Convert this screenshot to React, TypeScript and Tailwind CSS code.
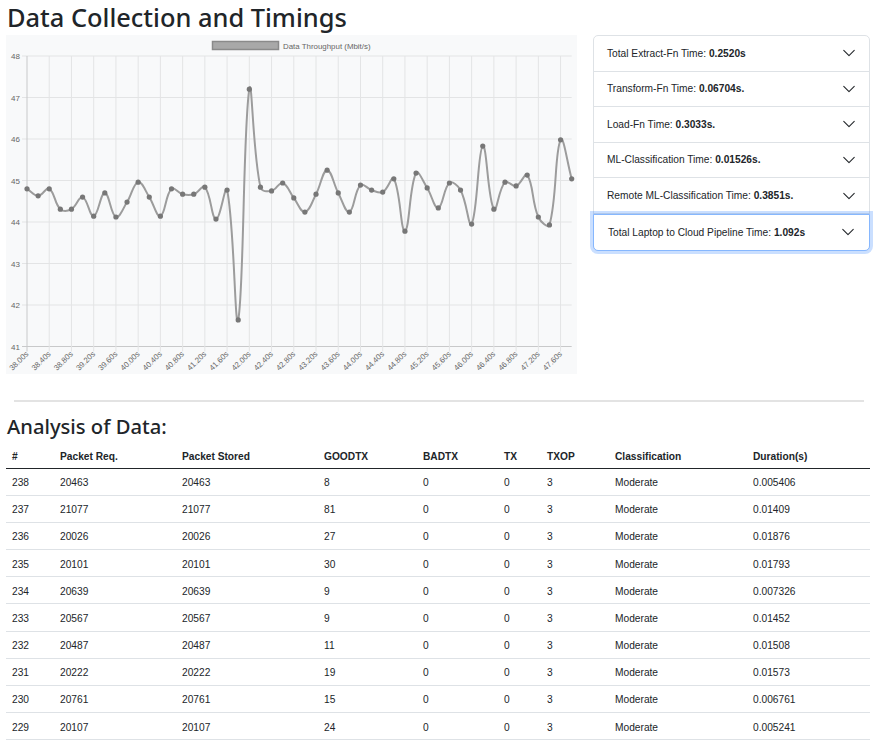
import React from "react";

const values = [
  44.8, 44.63, 44.8, 44.31, 44.31, 44.6, 44.14, 44.7, 44.12, 44.48,
  44.96, 44.6, 44.14, 44.8, 44.67, 44.67, 44.84, 44.07, 44.77, 41.64,
  47.2, 44.84, 44.75, 44.94, 44.58, 44.24, 44.67, 45.25, 44.7, 44.24,
  44.89, 44.77, 44.72, 45.04, 43.78, 45.18, 44.82, 44.34, 44.94, 44.77,
  43.95, 45.83, 44.31, 44.96, 44.87, 45.13, 44.12, 43.93, 45.98, 45.04,
];

const X0 = 21;
const DX = 11.116;
const Y48 = 21;
const UNIT = 41.5;

function px(i: number) {
  return X0 + i * DX;
}
function py(v: number) {
  return Y48 + (48 - v) * UNIT;
}

function buildPath(): string {
  const pts = values.map((v, i) => ({ x: px(i), y: py(v) }));
  const t = 0.4;
  const cps = pts.map((p, i) => {
    const prev = pts[i - 1] || p;
    const next = pts[i + 1] || p;
    const d01 = Math.hypot(p.x - prev.x, p.y - prev.y);
    const d12 = Math.hypot(next.x - p.x, next.y - p.y);
    let s01 = d01 / (d01 + d12);
    let s12 = d12 / (d01 + d12);
    if (isNaN(s01)) s01 = 0;
    if (isNaN(s12)) s12 = 0;
    const fa = t * s01;
    const fb = t * s12;
    return {
      prev: { x: p.x - fa * (next.x - prev.x), y: p.y - fa * (next.y - prev.y) },
      next: { x: p.x + fb * (next.x - prev.x), y: p.y + fb * (next.y - prev.y) },
    };
  });
  let d = `M${pts[0].x.toFixed(2)} ${pts[0].y.toFixed(2)}`;
  for (let i = 1; i < pts.length; i++) {
    const c1 = cps[i - 1].next;
    const c2 = cps[i].prev;
    d += ` C${c1.x.toFixed(2)} ${c1.y.toFixed(2)} ${c2.x.toFixed(2)} ${c2.y.toFixed(2)} ${pts[i].x.toFixed(2)} ${pts[i].y.toFixed(2)}`;
  }
  return d;
}

function Chart() {
  const labels: string[] = [];
  for (let k = 0; k < 25; k++) {
    labels.push((38 + k * 0.4).toFixed(2) + "s");
  }
  const yLabels = [48, 47, 46, 45, 44, 43, 42, 41];
  const right = px(49);
  return (
    <svg width="571" height="339" viewBox="0 0 571 339" className="block shrink-0">
      <rect x="0" y="0" width="571" height="339" fill="#f8f9fa" />
      <rect x="206.5" y="6.5" width="66" height="8" fill="#a8a8a8" stroke="#8a8a8a" strokeWidth="1.5" />
      <text x="277" y="13.5" fontSize="7.9" fill="#666" fontFamily="'Liberation Sans', Arial, sans-serif">
        Data Throughput (Mbit/s)
      </text>
      {yLabels.map((v) => (
        <g key={v}>
          <line x1={16} x2={right} y1={py(v)} y2={py(v)} stroke={v === 41 ? "#c8c9ca" : "#e3e4e5"} strokeWidth="1" />
          <text x={14} y={py(v) + 3} fontSize="8" fill="#666" textAnchor="end" fontFamily="'Liberation Sans', Arial, sans-serif">
            {v}
          </text>
        </g>
      ))}
      {labels.map((l, k) => {
        const x = px(k * 2);
        return (
          <g key={l}>
            <line x1={x} x2={x} y1={Y48} y2={py(41) + 5} stroke={k === 0 ? "#c8c9ca" : "#e3e4e5"} strokeWidth="1" />
            <text
              x={x + 2}
              y={py(41) + 8}
              fontSize="7.8"
              fill="#666"
              textAnchor="end"
              transform={`rotate(-45 ${x + 2} ${py(41) + 8})`}
              fontFamily="'Liberation Sans', Arial, sans-serif"
            >
              {l}
            </text>
          </g>
        );
      })}
      <path d={buildPath()} fill="none" stroke="#9c9c9c" strokeWidth="2" />
      {values.map((v, i) => (
        <circle key={i} cx={px(i)} cy={py(v)} r="2.6" fill="#777" />
      ))}
    </svg>
  );
}

const items: [string, string][] = [
  ["Total Extract-Fn Time: ", "0.2520s"],
  ["Transform-Fn Time: ", "0.06704s."],
  ["Load-Fn Time: ", "0.3033s."],
  ["ML-Classification Time: ", "0.01526s."],
  ["Remote ML-Classification Time: ", "0.3851s."],
  ["Total Laptop to Cloud Pipeline Time: ", "1.092s"],
];

function Chevron() {
  return (
    <svg width="14" height="14" viewBox="0 0 16 16" className="shrink-0">
      <path d="M2 5l6 6 6-6" fill="none" stroke="#212529" strokeWidth="1.2" strokeLinecap="round" strokeLinejoin="round" />
    </svg>
  );
}

function Accordion() {
  return (
    <div className="flex flex-col self-start w-[277px] rounded-[5px] border border-[#dee2e6] bg-white">
      {items.map(([a, b], i) => {
        const last = i === items.length - 1;
        return (
          <div
            key={i}
            className={
              last
                ? "h-[37px] -mx-px -mb-px flex items-center justify-between pl-[14px] pr-[14px] border border-[#86b7fe] rounded-b-[5px] shadow-[0_0_0_3px_rgba(13,110,253,0.22)] bg-white"
                : "h-[35.6px] flex items-center justify-between pl-[13px] pr-[13px] border-b border-[#dee2e6]"
            }
          >
            <span className="text-[10.2px] text-[#212529]">
              {a}
              <b className="font-bold">{b}</b>
            </span>
            <Chevron />
          </div>
        );
      })}
    </div>
  );
}

const rows = [
  ["238", "20463", "20463", "8", "0", "0", "3", "Moderate", "0.005406"],
  ["237", "21077", "21077", "81", "0", "0", "3", "Moderate", "0.01409"],
  ["236", "20026", "20026", "27", "0", "0", "3", "Moderate", "0.01876"],
  ["235", "20101", "20101", "30", "0", "0", "3", "Moderate", "0.01793"],
  ["234", "20639", "20639", "9", "0", "0", "3", "Moderate", "0.007326"],
  ["233", "20567", "20567", "9", "0", "0", "3", "Moderate", "0.01452"],
  ["232", "20487", "20487", "11", "0", "0", "3", "Moderate", "0.01508"],
  ["231", "20222", "20222", "19", "0", "0", "3", "Moderate", "0.01573"],
  ["230", "20761", "20761", "15", "0", "0", "3", "Moderate", "0.006761"],
  ["229", "20107", "20107", "24", "0", "0", "3", "Moderate", "0.005241"],
];

const headers = ["#", "Packet Req.", "Packet Stored", "GOODTX", "BADTX", "TX", "TXOP", "Classification", "Duration(s)"];
const widths = ["w-[48px]", "w-[122px]", "w-[142px]", "w-[99px]", "w-[81px]", "w-[43px]", "w-[68px]", "w-[138px]", "w-[123px]"];

export default function App() {
  return (
    <div className="w-[878px] min-h-[748px] bg-white text-[#212529] font-['Liberation_Sans',Arial,sans-serif] px-[6px]">
      <h2 className="font-['Noto_Sans',sans-serif] text-[25.4px] font-medium leading-[34px] pl-[1px]">Data Collection and Timings</h2>
      <div className="flex gap-[16px] mt-[1px]">
        <Chart />
        <Accordion />
      </div>
      <div className="mx-[8px] mt-[26px] h-[2px] bg-[#e3e3e3]" />
      <h3 className="font-['Noto_Sans',sans-serif] mt-[10px] text-[20.2px] font-medium leading-[28px] pl-[1px]">Analysis of Data:</h3>
      <table className="mt-[6px] w-[864px] border-collapse text-[10.2px] table-fixed">
        <thead>
          <tr className="border-b-[1.5px] border-[#212529]">
            {headers.map((h, i) => (
              <th key={h} className={`${widths[i]} h-[22px] px-[6px] text-left font-bold`}>
                {h}
              </th>
            ))}
          </tr>
        </thead>
        <tbody>
          {rows.map((r) => (
            <tr key={r[0]} className="border-b border-[#dee2e6]">
              {r.map((c, i) => (
                <td key={i} className="h-[27.2px] pt-[2px] px-[6px] text-left">
                  {c}
                </td>
              ))}
            </tr>
          ))}
        </tbody>
      </table>
    </div>
  );
}
